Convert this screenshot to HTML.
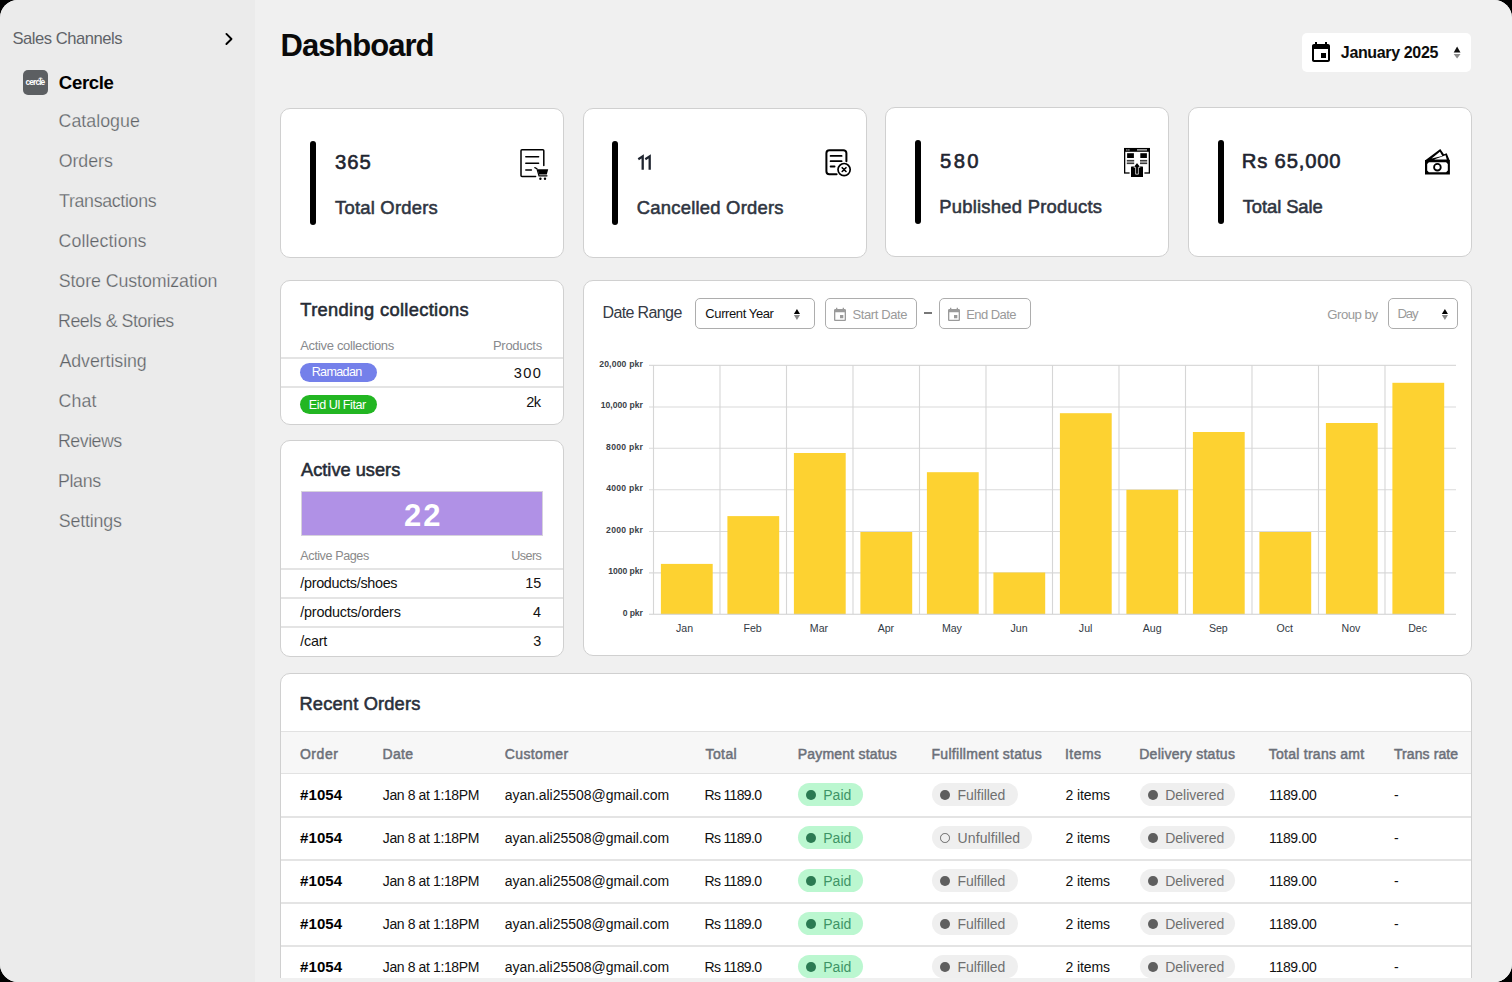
<!DOCTYPE html>
<html><head><meta charset="utf-8"><title>Dashboard</title>
<style>
html,body{margin:0;padding:0;background:#000;width:1512px;height:982px;overflow:hidden;}
#app{position:relative;width:1512px;height:982px;border-radius:18px;overflow:hidden;background:#f0f0f0;font-family:"Liberation Sans",sans-serif;}
.t{position:absolute;white-space:nowrap;line-height:1;}
.r{position:absolute;}
</style></head><body><div id="app">
<div class="r" style="left:0px;top:0px;width:255px;height:982px;background:#ebebeb;"></div>
<div class="t" style="left:12.50px;top:31.15px;font-size:16.6px;color:#5f6368;letter-spacing:-0.477px;">Sales Channels</div>
<svg class="r" style="left:222px;top:31px" width="14" height="16" viewBox="0 0 14 16"><path d="M4.4 2.9 L9.5 7.95 L4.4 13" fill="none" stroke="#000" stroke-width="1.9" stroke-linecap="round" stroke-linejoin="round"/></svg>
<div class="r" style="left:23px;top:70px;width:25px;height:25px;background:#5c5f62;border-radius:5px;"></div>
<div class="t" style="left:25.56px;top:77.99px;font-size:8.4px;color:#fff;font-weight:700;letter-spacing:-0.913px;">cercle</div>
<svg class="r" style="left:36px;top:75px" width="9" height="6" viewBox="0 0 9 6"><path d="M2.3 4.6 A2.3 2.3 0 0 1 6.7 4.4" fill="none" stroke="#fff" stroke-width="0.8"/></svg>
<div class="t" style="left:58.86px;top:73.86px;font-size:18.6px;color:#000;font-weight:700;letter-spacing:-0.364px;">Cercle</div>
<div class="t" style="left:58.61px;top:112.73px;font-size:17.8px;color:#5f6367;letter-spacing:0.015px;-webkit-text-stroke:0.25px #ebebeb;">Catalogue</div>
<div class="t" style="left:58.65px;top:152.73px;font-size:17.8px;color:#5f6367;letter-spacing:-0.022px;-webkit-text-stroke:0.25px #ebebeb;">Orders</div>
<div class="t" style="left:59.10px;top:192.73px;font-size:17.8px;color:#5f6367;letter-spacing:-0.329px;-webkit-text-stroke:0.25px #ebebeb;">Transactions</div>
<div class="t" style="left:58.61px;top:232.73px;font-size:17.8px;color:#5f6367;letter-spacing:0.093px;-webkit-text-stroke:0.25px #ebebeb;">Collections</div>
<div class="t" style="left:58.70px;top:272.73px;font-size:17.8px;color:#5f6367;letter-spacing:-0.079px;-webkit-text-stroke:0.25px #ebebeb;">Store Customization</div>
<div class="t" style="left:58.03px;top:312.73px;font-size:17.8px;color:#5f6367;letter-spacing:-0.450px;-webkit-text-stroke:0.25px #ebebeb;">Reels &amp; Stories</div>
<div class="t" style="left:59.46px;top:352.73px;font-size:17.8px;color:#5f6367;letter-spacing:-0.066px;-webkit-text-stroke:0.25px #ebebeb;">Advertising</div>
<div class="t" style="left:58.61px;top:392.73px;font-size:17.8px;color:#5f6367;letter-spacing:0.107px;-webkit-text-stroke:0.25px #ebebeb;">Chat</div>
<div class="t" style="left:58.03px;top:432.73px;font-size:17.8px;color:#5f6367;letter-spacing:-0.499px;-webkit-text-stroke:0.25px #ebebeb;">Reviews</div>
<div class="t" style="left:58.03px;top:472.73px;font-size:17.8px;color:#5f6367;letter-spacing:-0.363px;-webkit-text-stroke:0.25px #ebebeb;">Plans</div>
<div class="t" style="left:58.70px;top:512.73px;font-size:17.8px;color:#5f6367;letter-spacing:-0.154px;-webkit-text-stroke:0.25px #ebebeb;">Settings</div>
<div class="r" style="left:255px;top:0px;width:1257px;height:982px;background:#f0f0f0;"></div>
<div class="t" style="left:280.51px;top:29.66px;font-size:31px;color:#0a0a0a;font-weight:700;letter-spacing:-0.999px;">Dashboard</div>
<div class="r" style="left:1302px;top:33px;width:169px;height:39px;background:#fff;border-radius:5px;"></div>
<svg class="r" style="left:1309px;top:41px" width="24" height="24" viewBox="0 0 24 24"><path fill="#000" d="M17 12h-5v5h5v-5zM16 1v2H8V1H6v2H5c-1.11 0-1.99.9-1.99 2L3 19c0 1.1.89 2 2 2h14c1.1 0 2-.9 2-2V5c0-1.1-.9-2-2-2h-1V1h-2zm3 18H5V8h14v11z"/></svg>
<div class="t" style="left:1340.86px;top:44.56px;font-size:16px;color:#0d0d0d;font-weight:700;letter-spacing:-0.356px;">January 2025</div>
<svg class="r" style="left:1440px;top:40px" width="30" height="25" viewBox="1440 40 30 25"><path d="M1457.1 46.6 L1460.5 52.4 H1453.7Z" fill="#111"/><path d="M1457.1 58.4 L1460.5 53.9 H1453.7Z" fill="#8a8a8a"/></svg>
<div class="r" style="left:280px;top:108px;width:284px;height:150px;background:#fff;border:1px solid #d0d0d0;border-radius:10px;box-sizing:border-box;"></div>
<div class="r" style="left:310.0px;top:141px;width:6px;height:84px;background:#000;border-radius:3px;"></div>
<div class="t" style="left:334.94px;top:152.32px;font-size:20.3px;color:#1f2530;letter-spacing:0.961px;-webkit-text-stroke:0.6px #1f2530;">365</div>
<div class="t" style="left:335.06px;top:199.32px;font-size:18.4px;color:#2f3541;letter-spacing:0.225px;-webkit-text-stroke:0.55px #2f3541;">Total Orders</div>
<div class="r" style="left:583px;top:108px;width:284px;height:150px;background:#fff;border:1px solid #d0d0d0;border-radius:10px;box-sizing:border-box;"></div>
<div class="r" style="left:612.3px;top:141px;width:6px;height:84px;background:#000;border-radius:3px;"></div>
<svg class="r" style="left:630px;top:150px" width="30" height="25" viewBox="630 150 30 25"><path d="M638.3 159.2 L642.7 156.4 V169.8 M645.3 159.2 L649.7 156.4 V169.8" fill="none" stroke="#1f2530" stroke-width="2.3" stroke-linejoin="miter"/></svg>
<div class="t" style="left:636.86px;top:199.32px;font-size:18.4px;color:#2f3541;letter-spacing:0.234px;-webkit-text-stroke:0.55px #2f3541;">Cancelled Orders</div>
<div class="r" style="left:885px;top:107px;width:284px;height:150px;background:#fff;border:1px solid #d0d0d0;border-radius:10px;box-sizing:border-box;"></div>
<div class="r" style="left:915.2px;top:140px;width:6px;height:84px;background:#000;border-radius:3px;"></div>
<div class="t" style="left:940.09px;top:151.32px;font-size:20.3px;color:#1f2530;letter-spacing:2.312px;-webkit-text-stroke:0.6px #1f2530;">580</div>
<div class="t" style="left:939.16px;top:198.32px;font-size:18.4px;color:#2f3541;letter-spacing:0.262px;-webkit-text-stroke:0.55px #2f3541;">Published Products</div>
<div class="r" style="left:1188px;top:107px;width:284px;height:150px;background:#fff;border:1px solid #d0d0d0;border-radius:10px;box-sizing:border-box;"></div>
<div class="r" style="left:1217.7px;top:140px;width:6px;height:84px;background:#000;border-radius:3px;"></div>
<div class="t" style="left:1241.73px;top:151.32px;font-size:20.3px;color:#1f2530;letter-spacing:0.802px;-webkit-text-stroke:0.6px #1f2530;">Rs 65,000</div>
<div class="t" style="left:1242.76px;top:198.32px;font-size:18.4px;color:#2f3541;letter-spacing:-0.092px;-webkit-text-stroke:0.55px #2f3541;">Total Sale</div>
<svg class="r" style="left:0;top:0" width="1512" height="260" viewBox="0 0 1512 260">
<g fill="none" stroke="#000" stroke-linecap="round">
 <path d="M535.6 176.5 H522 a1 1 0 0 1 -1 -1 V150.8 a1 1 0 0 1 1 -1 H542.8 a1 1 0 0 1 1 1 V165.6" stroke-width="1.5"/>
 <path d="M525.8 156.7 H538.6 M525.8 163.2 H538.6 M525.8 170 H531.4" stroke-width="1.5"/>
 <path d="M534.8 167.6 L536.9 168.6 L539 175.8 H547" stroke-width="1.2"/>
</g>
<path d="M537.6 169.3 H548.2 L546.8 174.5 H539 Z" fill="#000"/>
<circle cx="540.4" cy="178.7" r="1.2" fill="#000"/><circle cx="545" cy="178.7" r="1.2" fill="#000"/>
<g fill="none" stroke="#000" stroke-linecap="round">
 <path d="M836.6 174.2 H829.4 a3 3 0 0 1 -3 -3 V153.2 a3 3 0 0 1 3 -3 H843.4 a3 3 0 0 1 3 3 V161.3" stroke-width="2"/>
 <path d="M830.6 155.9 H841.6 M830.6 161.2 H841.6 M830.6 166.5 H834.6" stroke-width="1.8"/>
 <circle cx="844.1" cy="169.6" r="6.1" stroke-width="1.7"/>
 <path d="M842.2 167.7 L846 171.5 M846 167.7 L842.2 171.5" stroke-width="1.6"/>
</g>
<g>
 <rect x="1124.65" y="148.6" width="24.7" height="24.4" fill="none" stroke="#000" stroke-width="1.3"/>
 <rect x="1124" y="148" width="26" height="3.8" fill="#000"/>
 <circle cx="1126.9" cy="149.9" r="0.6" fill="#fff"/><circle cx="1128.9" cy="149.9" r="0.6" fill="#fff"/>
 <rect x="1137" y="149.4" width="10" height="1" fill="#fff"/>
 <rect x="1127.1" y="153.2" width="6.8" height="4.8" fill="#000"/>
 <rect x="1140.3" y="153.2" width="6.6" height="4.8" fill="#000"/>
 <path d="M1126.8 160.4 H1134.2 M1126.8 162 H1134.2 M1126.8 163.6 H1134.2 M1140 160.4 H1147.2 M1140 162 H1147.2 M1140 163.6 H1147.2" stroke="#000" stroke-width="0.85"/>
 <rect x="1129.6" y="171.5" width="14.8" height="3" fill="#fff"/>
 <path d="M1131 167.2 Q1131 166.6 1131.6 166.6 H1142.4 Q1143 166.6 1143 167.2 V177 H1131 Z" fill="#000"/>
 <path d="M1137 163.2 L1140 167.3 H1138.4 V174.2 H1135.6 V167.3 H1134 Z" fill="#000" stroke="#fff" stroke-width="0.7" stroke-linejoin="miter"/>
 <path d="M1137 163.2 L1139.7 166.6 H1134.3 Z" fill="#000"/>
</g>
<g>
 <path d="M1425 160 H1449.9 V174.5 H1425 Z M1428.9 162.2 L1427.2 163.9 V170.4 L1428.9 172.2 H1446.1 L1447.8 170.4 V163.9 L1446.1 162.2 Z" fill="#000" fill-rule="evenodd"/>
 <circle cx="1437.4" cy="167.15" r="3.35" fill="none" stroke="#000" stroke-width="1.8"/>
 <path d="M1425.3 160.3 L1440.3 148.9 L1443.9 154.2 L1446.7 153.2 L1449.6 160.3 Z" fill="#000"/>
 <path d="M1431.6 158.4 L1439.9 151.8 L1442.3 155.9 Z" fill="#fff"/>
 <path d="M1434 159.6 L1445.5 155.2 L1446.8 159.6 Z" fill="#fff"/>
</g>
</svg>
<div class="r" style="left:280px;top:280px;width:284px;height:145px;background:#fff;border:1px solid #d0d0d0;border-radius:10px;box-sizing:border-box;"></div>
<div class="t" style="left:300.36px;top:300.61px;font-size:18.3px;color:#262b35;letter-spacing:0.337px;-webkit-text-stroke:0.55px #262b35;">Trending collections</div>
<div class="t" style="left:300.27px;top:339.40px;font-size:13px;color:#888a8e;letter-spacing:-0.337px;">Active collections</div>
<div class="t" style="left:493.03px;top:339.40px;font-size:13px;color:#888a8e;letter-spacing:-0.313px;">Products</div>
<div class="r" style="left:281px;top:357.2px;width:282px;height:1.6px;background:#e4e4e4;"></div>
<div class="r" style="left:281px;top:386.2px;width:282px;height:1.6px;background:#e4e4e4;"></div>
<div class="r" style="left:300px;top:362.8px;width:77px;height:19px;background:#7480ea;border-radius:10px;"></div>
<div class="t" style="left:311.66px;top:366.13px;font-size:12.6px;color:#fff;letter-spacing:-0.666px;">Ramadan</div>
<div class="t" style="left:513.65px;top:365.84px;font-size:14.6px;color:#111;letter-spacing:1.425px;">300</div>
<div class="r" style="left:300px;top:395px;width:77px;height:19px;background:#22b622;border-radius:10px;"></div>
<div class="t" style="left:308.86px;top:399.03px;font-size:12.6px;color:#fff;letter-spacing:-0.443px;">Eid Ul Fitar</div>
<div class="t" style="left:526.17px;top:394.64px;font-size:14.6px;color:#111;letter-spacing:-0.573px;">2k</div>
<div class="r" style="left:280px;top:440px;width:284px;height:217px;background:#fff;border:1px solid #d0d0d0;border-radius:10px;box-sizing:border-box;"></div>
<div class="t" style="left:301.03px;top:460.59px;font-size:18.2px;color:#262b35;letter-spacing:0.017px;-webkit-text-stroke:0.55px #262b35;">Active users</div>
<div class="r" style="left:301px;top:491px;width:242px;height:45px;background:#b091e6;border:1px solid #d6d2dc;box-sizing:border-box;"></div>
<div class="t" style="left:403.92px;top:500.36px;font-size:31px;color:#fff;font-weight:700;letter-spacing:2.037px;">22</div>
<div class="t" style="left:300.27px;top:550.43px;font-size:12.6px;color:#8a8a8a;letter-spacing:-0.416px;">Active Pages</div>
<div class="t" style="left:511.22px;top:550.43px;font-size:12.6px;color:#8a8a8a;letter-spacing:-0.550px;">Users</div>
<div class="r" style="left:281px;top:568px;width:282px;height:1.5px;background:#e4e4e4;"></div>
<div class="r" style="left:281px;top:597.3px;width:282px;height:1.5px;background:#e4e4e4;"></div>
<div class="r" style="left:281px;top:626.2px;width:282px;height:1.5px;background:#e4e4e4;"></div>
<div class="t" style="left:300.30px;top:576.41px;font-size:14.4px;color:#111;letter-spacing:-0.311px;">/products/shoes</div>
<div class="t" style="left:525.19px;top:576.41px;font-size:14.4px;color:#111;">15</div>
<div class="t" style="left:300.30px;top:605.31px;font-size:14.4px;color:#111;letter-spacing:-0.229px;">/products/orders</div>
<div class="t" style="left:533.00px;top:605.31px;font-size:14.4px;color:#111;">4</div>
<div class="t" style="left:300.30px;top:634.41px;font-size:14.4px;color:#111;letter-spacing:-0.250px;">/cart</div>
<div class="t" style="left:533.22px;top:634.41px;font-size:14.4px;color:#111;">3</div>
<div class="r" style="left:583px;top:280px;width:889px;height:376px;background:#fff;border:1px solid #d0d0d0;border-radius:10px;box-sizing:border-box;"></div>
<div class="t" style="left:602.48px;top:305.16px;font-size:16px;color:#353a45;letter-spacing:-0.618px;">Date Range</div>
<div class="r" style="left:695px;top:298px;width:120px;height:31px;background:#fff;border:1px solid #adadad;border-radius:5px;box-sizing:border-box;"></div>
<div class="t" style="left:705.35px;top:307.10px;font-size:13px;color:#111;letter-spacing:-0.405px;">Current Year</div>
<svg class="r" style="left:785px;top:300px" width="25" height="25" viewBox="785 300 25 25"><path d="M796.95 308.9 L800 313.9 H793.9Z" fill="#000"/><path d="M796.95 319.9 L800 315.1 H793.9Z" fill="#888"/></svg>
<div class="r" style="left:825px;top:298px;width:92px;height:31px;background:#fff;border:1px solid #adadad;border-radius:5px;box-sizing:border-box;"></div>
<svg class="r" style="left:832px;top:306.5px" width="16" height="16" viewBox="0 0 24 24"><path fill="#9a9a9a" d="M17 12h-5v5h5v-5zM16 1v2H8V1H6v2H5c-1.11 0-1.99.9-1.99 2L3 19c0 1.1.89 2 2 2h14c1.1 0 2-.9 2-2V5c0-1.1-.9-2-2-2h-1V1h-2zm3 18H5V8h14v11z"/></svg>
<div class="t" style="left:852.41px;top:307.50px;font-size:13px;color:#9a9a9a;letter-spacing:-0.374px;">Start Date</div>
<div class="r" style="left:939px;top:298px;width:92px;height:31px;background:#fff;border:1px solid #adadad;border-radius:5px;box-sizing:border-box;"></div>
<svg class="r" style="left:946px;top:306.5px" width="16" height="16" viewBox="0 0 24 24"><path fill="#9a9a9a" d="M17 12h-5v5h5v-5zM16 1v2H8V1H6v2H5c-1.11 0-1.99.9-1.99 2L3 19c0 1.1.89 2 2 2h14c1.1 0 2-.9 2-2V5c0-1.1-.9-2-2-2h-1V1h-2zm3 18H5V8h14v11z"/></svg>
<div class="t" style="left:966.23px;top:307.50px;font-size:13px;color:#9a9a9a;letter-spacing:-0.565px;">End Date</div>
<div class="r" style="left:924px;top:312px;width:8px;height:1.6px;background:#777;"></div>
<div class="t" style="left:1327.34px;top:307.73px;font-size:13.2px;color:#9a9a9a;letter-spacing:-0.513px;">Group by</div>
<div class="r" style="left:1388px;top:298px;width:70px;height:31px;background:#fff;border:1px solid #adadad;border-radius:5px;box-sizing:border-box;"></div>
<div class="t" style="left:1397.51px;top:307.33px;font-size:13.2px;color:#9a9a9a;letter-spacing:-1.170px;">Day</div>
<svg class="r" style="left:1433px;top:300px" width="25" height="25" viewBox="1433 300 25 25"><path d="M1444.9 308.9 L1447.95 313.9 H1441.85Z" fill="#000"/><path d="M1444.9 319.9 L1447.95 315.1 H1441.85Z" fill="#888"/></svg>
<svg class="r" style="left:0;top:0" width="1512" height="982"><line x1="649" y1="365.4" x2="1456" y2="365.4" stroke="#dadada" stroke-width="1.1"/><line x1="649" y1="407" x2="1456" y2="407" stroke="#dadada" stroke-width="1.1"/><line x1="649" y1="448.2" x2="1456" y2="448.2" stroke="#dadada" stroke-width="1.1"/><line x1="649" y1="489.8" x2="1456" y2="489.8" stroke="#dadada" stroke-width="1.1"/><line x1="649" y1="531.5" x2="1456" y2="531.5" stroke="#dadada" stroke-width="1.1"/><line x1="649" y1="572.9" x2="1456" y2="572.9" stroke="#dadada" stroke-width="1.1"/><line x1="653.5" y1="365" x2="653.5" y2="614" stroke="#d6d6d6" stroke-width="1.1"/><line x1="720.0" y1="365" x2="720.0" y2="614" stroke="#d6d6d6" stroke-width="1.1"/><line x1="786.5" y1="365" x2="786.5" y2="614" stroke="#d6d6d6" stroke-width="1.1"/><line x1="853.0" y1="365" x2="853.0" y2="614" stroke="#d6d6d6" stroke-width="1.1"/><line x1="919.5" y1="365" x2="919.5" y2="614" stroke="#d6d6d6" stroke-width="1.1"/><line x1="986.0" y1="365" x2="986.0" y2="614" stroke="#d6d6d6" stroke-width="1.1"/><line x1="1052.5" y1="365" x2="1052.5" y2="614" stroke="#d6d6d6" stroke-width="1.1"/><line x1="1119.0" y1="365" x2="1119.0" y2="614" stroke="#d6d6d6" stroke-width="1.1"/><line x1="1185.5" y1="365" x2="1185.5" y2="614" stroke="#d6d6d6" stroke-width="1.1"/><line x1="1252.0" y1="365" x2="1252.0" y2="614" stroke="#d6d6d6" stroke-width="1.1"/><line x1="1318.5" y1="365" x2="1318.5" y2="614" stroke="#d6d6d6" stroke-width="1.1"/><line x1="1385.0" y1="365" x2="1385.0" y2="614" stroke="#d6d6d6" stroke-width="1.1"/><rect x="660.9" y="563.9" width="51.8" height="50.3" fill="#fdd231"/><rect x="727.4" y="516.1" width="51.8" height="98.1" fill="#fdd231"/><rect x="793.9" y="453" width="51.8" height="161.2" fill="#fdd231"/><rect x="860.4" y="532" width="51.8" height="82.2" fill="#fdd231"/><rect x="926.9" y="472.2" width="51.8" height="142.0" fill="#fdd231"/><rect x="993.4" y="572.5" width="51.8" height="41.7" fill="#fdd231"/><rect x="1059.9" y="413.2" width="51.8" height="201.0" fill="#fdd231"/><rect x="1126.4" y="489.8" width="51.8" height="124.4" fill="#fdd231"/><rect x="1192.9" y="432" width="51.8" height="182.2" fill="#fdd231"/><rect x="1259.4" y="532" width="51.8" height="82.2" fill="#fdd231"/><rect x="1325.9" y="423" width="51.8" height="191.2" fill="#fdd231"/><rect x="1392.4" y="382.8" width="51.8" height="231.4" fill="#fdd231"/><line x1="649" y1="614.2" x2="1456" y2="614.2" stroke="#cfcfcf" stroke-width="1.1"/></svg>
<div class="t" style="left:599.20px;top:359.82px;font-size:8.6px;color:#3b3f48;font-weight:700;letter-spacing:0.184px;">20,000 pkr</div>
<div class="t" style="left:600.76px;top:401.42px;font-size:8.6px;color:#3b3f48;font-weight:700;letter-spacing:0.010px;">10,000 pkr</div>
<div class="t" style="left:606.12px;top:442.62px;font-size:8.6px;color:#3b3f48;font-weight:700;letter-spacing:0.270px;">8000 pkr</div>
<div class="t" style="left:606.27px;top:484.22px;font-size:8.6px;color:#3b3f48;font-weight:700;letter-spacing:0.249px;">4000 pkr</div>
<div class="t" style="left:606.10px;top:525.92px;font-size:8.6px;color:#3b3f48;font-weight:700;letter-spacing:0.273px;">2000 pkr</div>
<div class="t" style="left:608.16px;top:567.32px;font-size:8.6px;color:#3b3f48;font-weight:700;letter-spacing:-0.021px;">1000 pkr</div>
<div class="t" style="left:622.66px;top:608.62px;font-size:8.6px;color:#3b3f48;font-weight:700;letter-spacing:-0.070px;">0 pkr</div>
<div class="t" style="left:675.94px;top:623.03px;font-size:10.6px;color:#333a44;letter-spacing:0.028px;">Jan</div>
<div class="t" style="left:743.50px;top:623.03px;font-size:10.6px;color:#333a44;">Feb</div>
<div class="t" style="left:809.86px;top:623.03px;font-size:10.6px;color:#333a44;">Mar</div>
<div class="t" style="left:877.67px;top:623.03px;font-size:10.6px;color:#333a44;">Apr</div>
<div class="t" style="left:941.91px;top:623.03px;font-size:10.6px;color:#333a44;">May</div>
<div class="t" style="left:1010.57px;top:623.03px;font-size:10.6px;color:#333a44;">Jun</div>
<div class="t" style="left:1078.86px;top:623.03px;font-size:10.6px;color:#333a44;">Jul</div>
<div class="t" style="left:1142.75px;top:623.03px;font-size:10.6px;color:#333a44;">Aug</div>
<div class="t" style="left:1208.90px;top:623.03px;font-size:10.6px;color:#333a44;">Sep</div>
<div class="t" style="left:1276.40px;top:623.03px;font-size:10.6px;color:#333a44;">Oct</div>
<div class="t" style="left:1341.51px;top:623.03px;font-size:10.6px;color:#333a44;">Nov</div>
<div class="t" style="left:1408.14px;top:623.03px;font-size:10.6px;color:#333a44;">Dec</div>
<div class="r" style="left:280px;top:673px;width:1192px;height:330px;background:#fff;border:1px solid #d0d0d0;border-radius:10px;box-sizing:border-box;"></div>
<div class="t" style="left:299.47px;top:694.81px;font-size:18.3px;color:#2a2f3a;letter-spacing:0.167px;-webkit-text-stroke:0.55px #2a2f3a;">Recent Orders</div>
<div class="r" style="left:281px;top:730.5px;width:1190px;height:43.8px;background:#f7f7f7;border-top:1.5px solid #e2e2e2;border-bottom:1.5px solid #e2e2e2;box-sizing:border-box;"></div>
<div class="t" style="left:299.88px;top:747.25px;font-size:14px;color:#6c7079;letter-spacing:0.576px;-webkit-text-stroke:0.5px #6c7079;">Order</div>
<div class="t" style="left:382.50px;top:747.25px;font-size:14px;color:#6c7079;letter-spacing:0.337px;-webkit-text-stroke:0.5px #6c7079;">Date</div>
<div class="t" style="left:504.85px;top:747.25px;font-size:14px;color:#6c7079;letter-spacing:0.360px;-webkit-text-stroke:0.5px #6c7079;">Customer</div>
<div class="t" style="left:705.53px;top:747.25px;font-size:14px;color:#6c7079;letter-spacing:0.396px;-webkit-text-stroke:0.5px #6c7079;">Total</div>
<div class="t" style="left:797.70px;top:747.25px;font-size:14px;color:#6c7079;letter-spacing:0.204px;-webkit-text-stroke:0.5px #6c7079;">Payment status</div>
<div class="t" style="left:931.50px;top:747.25px;font-size:14px;color:#6c7079;letter-spacing:0.301px;-webkit-text-stroke:0.5px #6c7079;">Fulfillment status</div>
<div class="t" style="left:1064.95px;top:747.25px;font-size:14px;color:#6c7079;letter-spacing:0.464px;-webkit-text-stroke:0.5px #6c7079;">Items</div>
<div class="t" style="left:1139.19px;top:747.25px;font-size:14px;color:#6c7079;letter-spacing:0.281px;-webkit-text-stroke:0.5px #6c7079;">Delivery status</div>
<div class="t" style="left:1268.84px;top:747.25px;font-size:14px;color:#6c7079;letter-spacing:0.251px;-webkit-text-stroke:0.5px #6c7079;">Total trans amt</div>
<div class="t" style="left:1393.93px;top:747.25px;font-size:14px;color:#6c7079;letter-spacing:0.092px;-webkit-text-stroke:0.5px #6c7079;">Trans rate</div>
<div class="t" style="left:300.04px;top:787.30px;font-size:15px;color:#000;font-weight:700;letter-spacing:0.084px;">#1054</div>
<div class="t" style="left:382.79px;top:788.15px;font-size:14px;color:#111;letter-spacing:-0.385px;">Jan 8 at 1:18PM</div>
<div class="t" style="left:504.70px;top:788.15px;font-size:14px;color:#111;letter-spacing:-0.032px;">ayan.ali25508@gmail.com</div>
<div class="t" style="left:704.45px;top:788.15px;font-size:14px;color:#111;letter-spacing:-0.647px;">Rs 1189.0</div>
<div class="r" style="left:798px;top:783px;width:65px;height:23px;background:#bbf7d0;border-radius:12px;"></div>
<div class="r" style="left:806.1px;top:790.1px;width:9.8px;height:9.8px;background:#2b7a52;border-radius:50%;"></div>
<div class="t" style="left:823.25px;top:788.15px;font-size:14px;color:#3e9466;letter-spacing:0.010px;">Paid</div>
<div class="r" style="left:932.3px;top:782.9px;width:85.6px;height:23.2px;background:#efefef;border-radius:12px;"></div>
<div class="r" style="left:939.9px;top:790.1px;width:9.8px;height:9.8px;background:#5f5f5f;border-radius:50%;"></div>
<div class="t" style="left:957.55px;top:788.15px;font-size:14px;color:#707070;letter-spacing:-0.063px;">Fulfilled</div>
<div class="t" style="left:1065.60px;top:788.15px;font-size:14px;color:#111;letter-spacing:-0.121px;">2 items</div>
<div class="r" style="left:1140.3px;top:782.9px;width:94.5px;height:23.2px;background:#efefef;border-radius:12px;"></div>
<div class="r" style="left:1148px;top:790.1px;width:9.8px;height:9.8px;background:#5f5f5f;border-radius:50%;"></div>
<div class="t" style="left:1165.25px;top:788.15px;font-size:14px;color:#707070;letter-spacing:-0.023px;">Delivered</div>
<div class="t" style="left:1268.95px;top:788.15px;font-size:14px;color:#111;letter-spacing:-0.297px;">1189.00</div>
<div class="t" style="left:1394.07px;top:788.15px;font-size:14px;color:#111;">-</div>
<div class="r" style="left:281px;top:816.4px;width:1190px;height:1.5px;background:#e4e4e4;"></div>
<div class="t" style="left:300.04px;top:830.30px;font-size:15px;color:#000;font-weight:700;letter-spacing:0.084px;">#1054</div>
<div class="t" style="left:382.79px;top:831.15px;font-size:14px;color:#111;letter-spacing:-0.385px;">Jan 8 at 1:18PM</div>
<div class="t" style="left:504.70px;top:831.15px;font-size:14px;color:#111;letter-spacing:-0.032px;">ayan.ali25508@gmail.com</div>
<div class="t" style="left:704.45px;top:831.15px;font-size:14px;color:#111;letter-spacing:-0.647px;">Rs 1189.0</div>
<div class="r" style="left:798px;top:826px;width:65px;height:23px;background:#bbf7d0;border-radius:12px;"></div>
<div class="r" style="left:806.1px;top:833.1px;width:9.8px;height:9.8px;background:#2b7a52;border-radius:50%;"></div>
<div class="t" style="left:823.25px;top:831.15px;font-size:14px;color:#3e9466;letter-spacing:0.010px;">Paid</div>
<div class="r" style="left:932.3px;top:825.9px;width:99.6px;height:23.2px;background:#efefef;border-radius:12px;"></div>
<div class="r" style="left:940px;top:833.2px;width:9.6px;height:9.6px;border:1.3px solid #6a6a6a;border-radius:50%;box-sizing:border-box;"></div>
<div class="t" style="left:957.62px;top:831.15px;font-size:14px;color:#707070;letter-spacing:0.100px;">Unfulfilled</div>
<div class="t" style="left:1065.60px;top:831.15px;font-size:14px;color:#111;letter-spacing:-0.121px;">2 items</div>
<div class="r" style="left:1140.3px;top:825.9px;width:94.5px;height:23.2px;background:#efefef;border-radius:12px;"></div>
<div class="r" style="left:1148px;top:833.1px;width:9.8px;height:9.8px;background:#5f5f5f;border-radius:50%;"></div>
<div class="t" style="left:1165.25px;top:831.15px;font-size:14px;color:#707070;letter-spacing:-0.023px;">Delivered</div>
<div class="t" style="left:1268.95px;top:831.15px;font-size:14px;color:#111;letter-spacing:-0.297px;">1189.00</div>
<div class="t" style="left:1394.07px;top:831.15px;font-size:14px;color:#111;">-</div>
<div class="r" style="left:281px;top:859.4px;width:1190px;height:1.5px;background:#e4e4e4;"></div>
<div class="t" style="left:300.04px;top:873.30px;font-size:15px;color:#000;font-weight:700;letter-spacing:0.084px;">#1054</div>
<div class="t" style="left:382.79px;top:874.15px;font-size:14px;color:#111;letter-spacing:-0.385px;">Jan 8 at 1:18PM</div>
<div class="t" style="left:504.70px;top:874.15px;font-size:14px;color:#111;letter-spacing:-0.032px;">ayan.ali25508@gmail.com</div>
<div class="t" style="left:704.45px;top:874.15px;font-size:14px;color:#111;letter-spacing:-0.647px;">Rs 1189.0</div>
<div class="r" style="left:798px;top:869px;width:65px;height:23px;background:#bbf7d0;border-radius:12px;"></div>
<div class="r" style="left:806.1px;top:876.1px;width:9.8px;height:9.8px;background:#2b7a52;border-radius:50%;"></div>
<div class="t" style="left:823.25px;top:874.15px;font-size:14px;color:#3e9466;letter-spacing:0.010px;">Paid</div>
<div class="r" style="left:932.3px;top:868.9px;width:85.6px;height:23.2px;background:#efefef;border-radius:12px;"></div>
<div class="r" style="left:939.9px;top:876.1px;width:9.8px;height:9.8px;background:#5f5f5f;border-radius:50%;"></div>
<div class="t" style="left:957.55px;top:874.15px;font-size:14px;color:#707070;letter-spacing:-0.063px;">Fulfilled</div>
<div class="t" style="left:1065.60px;top:874.15px;font-size:14px;color:#111;letter-spacing:-0.121px;">2 items</div>
<div class="r" style="left:1140.3px;top:868.9px;width:94.5px;height:23.2px;background:#efefef;border-radius:12px;"></div>
<div class="r" style="left:1148px;top:876.1px;width:9.8px;height:9.8px;background:#5f5f5f;border-radius:50%;"></div>
<div class="t" style="left:1165.25px;top:874.15px;font-size:14px;color:#707070;letter-spacing:-0.023px;">Delivered</div>
<div class="t" style="left:1268.95px;top:874.15px;font-size:14px;color:#111;letter-spacing:-0.297px;">1189.00</div>
<div class="t" style="left:1394.07px;top:874.15px;font-size:14px;color:#111;">-</div>
<div class="r" style="left:281px;top:902.4px;width:1190px;height:1.5px;background:#e4e4e4;"></div>
<div class="t" style="left:300.04px;top:916.30px;font-size:15px;color:#000;font-weight:700;letter-spacing:0.084px;">#1054</div>
<div class="t" style="left:382.79px;top:917.15px;font-size:14px;color:#111;letter-spacing:-0.385px;">Jan 8 at 1:18PM</div>
<div class="t" style="left:504.70px;top:917.15px;font-size:14px;color:#111;letter-spacing:-0.032px;">ayan.ali25508@gmail.com</div>
<div class="t" style="left:704.45px;top:917.15px;font-size:14px;color:#111;letter-spacing:-0.647px;">Rs 1189.0</div>
<div class="r" style="left:798px;top:912px;width:65px;height:23px;background:#bbf7d0;border-radius:12px;"></div>
<div class="r" style="left:806.1px;top:919.1px;width:9.8px;height:9.8px;background:#2b7a52;border-radius:50%;"></div>
<div class="t" style="left:823.25px;top:917.15px;font-size:14px;color:#3e9466;letter-spacing:0.010px;">Paid</div>
<div class="r" style="left:932.3px;top:911.9px;width:85.6px;height:23.2px;background:#efefef;border-radius:12px;"></div>
<div class="r" style="left:939.9px;top:919.1px;width:9.8px;height:9.8px;background:#5f5f5f;border-radius:50%;"></div>
<div class="t" style="left:957.55px;top:917.15px;font-size:14px;color:#707070;letter-spacing:-0.063px;">Fulfilled</div>
<div class="t" style="left:1065.60px;top:917.15px;font-size:14px;color:#111;letter-spacing:-0.121px;">2 items</div>
<div class="r" style="left:1140.3px;top:911.9px;width:94.5px;height:23.2px;background:#efefef;border-radius:12px;"></div>
<div class="r" style="left:1148px;top:919.1px;width:9.8px;height:9.8px;background:#5f5f5f;border-radius:50%;"></div>
<div class="t" style="left:1165.25px;top:917.15px;font-size:14px;color:#707070;letter-spacing:-0.023px;">Delivered</div>
<div class="t" style="left:1268.95px;top:917.15px;font-size:14px;color:#111;letter-spacing:-0.297px;">1189.00</div>
<div class="t" style="left:1394.07px;top:917.15px;font-size:14px;color:#111;">-</div>
<div class="r" style="left:281px;top:945.4px;width:1190px;height:1.5px;background:#e4e4e4;"></div>
<div class="t" style="left:300.04px;top:959.30px;font-size:15px;color:#000;font-weight:700;letter-spacing:0.084px;">#1054</div>
<div class="t" style="left:382.79px;top:960.15px;font-size:14px;color:#111;letter-spacing:-0.385px;">Jan 8 at 1:18PM</div>
<div class="t" style="left:504.70px;top:960.15px;font-size:14px;color:#111;letter-spacing:-0.032px;">ayan.ali25508@gmail.com</div>
<div class="t" style="left:704.45px;top:960.15px;font-size:14px;color:#111;letter-spacing:-0.647px;">Rs 1189.0</div>
<div class="r" style="left:798px;top:955px;width:65px;height:23px;background:#bbf7d0;border-radius:12px;"></div>
<div class="r" style="left:806.1px;top:962.1px;width:9.8px;height:9.8px;background:#2b7a52;border-radius:50%;"></div>
<div class="t" style="left:823.25px;top:960.15px;font-size:14px;color:#3e9466;letter-spacing:0.010px;">Paid</div>
<div class="r" style="left:932.3px;top:954.9px;width:85.6px;height:23.2px;background:#efefef;border-radius:12px;"></div>
<div class="r" style="left:939.9px;top:962.1px;width:9.8px;height:9.8px;background:#5f5f5f;border-radius:50%;"></div>
<div class="t" style="left:957.55px;top:960.15px;font-size:14px;color:#707070;letter-spacing:-0.063px;">Fulfilled</div>
<div class="t" style="left:1065.60px;top:960.15px;font-size:14px;color:#111;letter-spacing:-0.121px;">2 items</div>
<div class="r" style="left:1140.3px;top:954.9px;width:94.5px;height:23.2px;background:#efefef;border-radius:12px;"></div>
<div class="r" style="left:1148px;top:962.1px;width:9.8px;height:9.8px;background:#5f5f5f;border-radius:50%;"></div>
<div class="t" style="left:1165.25px;top:960.15px;font-size:14px;color:#707070;letter-spacing:-0.023px;">Delivered</div>
<div class="t" style="left:1268.95px;top:960.15px;font-size:14px;color:#111;letter-spacing:-0.297px;">1189.00</div>
<div class="t" style="left:1394.07px;top:960.15px;font-size:14px;color:#111;">-</div>
<div class="r" style="left:255px;top:978px;width:1257px;height:4px;background:#f0f0f0;"></div>
</div></body></html>
